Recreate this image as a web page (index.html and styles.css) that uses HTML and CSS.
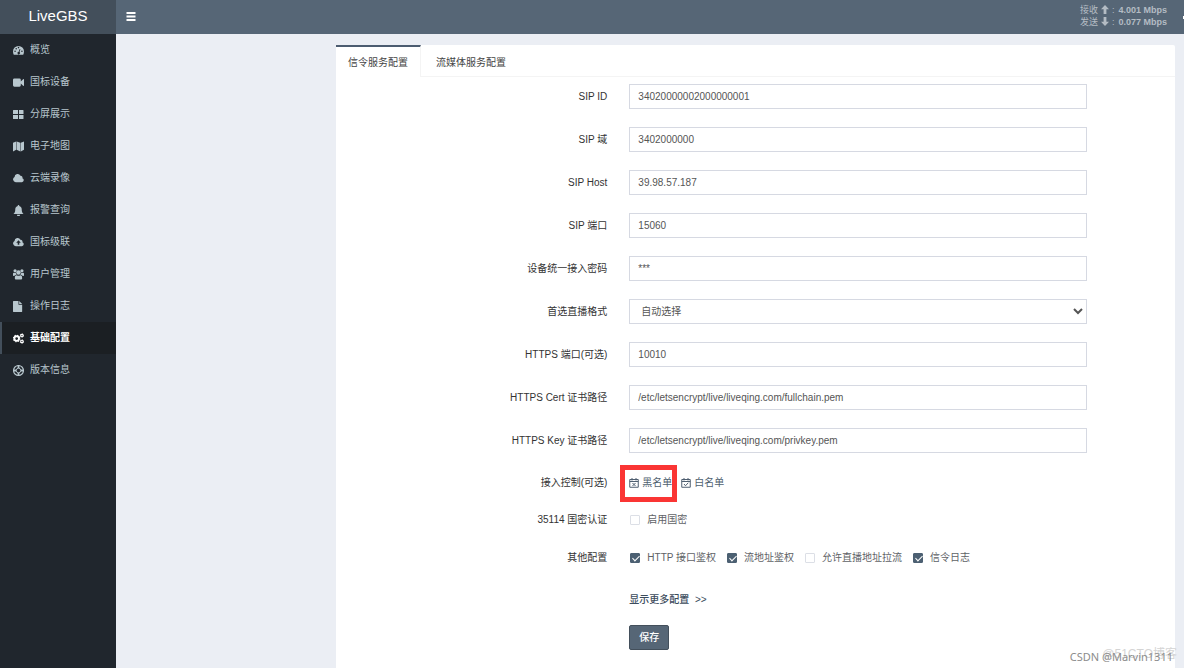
FILE: index.html
```html
<!DOCTYPE html>
<html lang="zh-CN">
<head>
<meta charset="utf-8">
<meta name="viewport" content="width=device-width, initial-scale=1">
<title>LiveGBS</title>
<link rel="stylesheet" href="styles.css">
</head>
<body>
<div class="app">
  <header class="topbar">
    <a class="logo" href="#">LiveGBS</a>
    <button class="toggle" type="button" aria-label="菜单">
      <svg viewBox="0 0 10 9"><path d="M.5 0h9v2h-9zM.5 3.5h9v2h-9zM.5 7h9v2h-9z"/></svg>
    </button>
    <div class="traffic">
      <div class="rate"><span>接收</span><svg viewBox="0 0 8 9"><path d="M4 0l4 4.2H5.4V9H2.6V4.2H0z"/></svg><span>:</span><b>4.001 Mbps</b></div>
      <div class="rate"><span>发送</span><svg viewBox="0 0 8 9"><path d="M4 9L0 4.8h2.6V0h2.8v4.8H8z"/></svg><span>:</span><b>0.077 Mbps</b></div>
    </div>
    <span class="user-dot"></span>
  </header>

  <nav class="sidebar">
    <a class="item" href="#"><svg viewBox="0 0 24 24"><path fill-rule="evenodd" d="M12 2A12 12 0 0 0 0 14c0 2.800.7 5.300 1.700 7h20.600c1-1.700 1.700-4.200 1.700-7A12 12 0 0 0 12 2zM4.500 12a1.700 1.700 0 1 1 0 3.400 1.700 1.700 0 0 1 0-3.400zM7 6.500a1.700 1.700 0 1 1 0 3.400 1.700 1.700 0 0 1 0-3.400zM12 4a1.700 1.700 0 1 1 0 3.400A1.700 1.700 0 0 1 12 4zM19.500 12a1.700 1.700 0 1 1 0 3.400 1.700 1.700 0 0 1 0-3.400zM14.500 8.500l1.700.6-2 6.300a2.800 2.800 0 1 1-1.800-.5z"/></svg>概览</a>
    <a class="item" href="#"><svg viewBox="0 0 24 24"><path d="M3 3h11a3 3 0 0 1 3 3v4l5-5c1-1 2-.5 2 1v12c0 1.500-1 2-2 1l-5-5v4a3 3 0 0 1-3 3H3a3 3 0 0 1-3-3V6a3 3 0 0 1 3-3z"/></svg>国标设备</a>
    <a class="item" href="#"><svg viewBox="0 0 22 22"><path d="M1 2h9v8H0V3a1 1 0 0 1 1-1zM12 2h8a1 1 0 0 1 1 1v7h-9zM0 12h10v8H1a1 1 0 0 1-1-1zM12 12h9v7a1 1 0 0 1-1 1h-8z"/></svg>分屏展示</a>
    <a class="item" href="#"><svg viewBox="0 0 24 24"><path d="M0 4l7-3v18l-7 4zM8 1l8 3v19l-8-4zM17 4l7-3v18l-7 4z"/></svg>电子地图</a>
    <a class="item" href="#"><svg viewBox="0 0 24 24"><path d="M6 20a6 6 0 0 1-2.600-11.300A6.700 6.700 0 0 1 16.200 6a4 4 0 0 1 4.300 5.300A4.500 4.500 0 0 1 19.500 20z"/></svg>云端录像</a>
    <a class="item" href="#"><svg viewBox="0 0 24 24"><path d="M12 0a1.500 1.500 0 0 1 1.500 2C17 2.800 19 5.500 19 9c0 6 1.500 8 4 10.500H1C3.500 17 5 15 5 9c0-3.500 2-6.200 5.500-7A1.500 1.500 0 0 1 12 0zM8.500 21h7a3.500 3.500 0 0 1-7 0z"/></svg>报警查询</a>
    <a class="item" href="#"><svg viewBox="0 0 24 24"><path fill-rule="evenodd" d="M6 20a6 6 0 0 1-2.600-11.300A6.700 6.700 0 0 1 16.200 6a4 4 0 0 1 4.300 5.300A4.500 4.500 0 0 1 19.500 20zM12 7l-5 5.500h3.300V17h3.400v-4.500H17z"/></svg>国标级联</a>
    <a class="item" href="#"><svg viewBox="0 0 24 24"><circle cx="4.500" cy="4" r="3.500"/><circle cx="19.500" cy="4" r="3.500"/><circle cx="12" cy="7.500" r="4.900"/><path d="M0 14V10.500C0 9 1 8 2.500 8.500c1.300.5 2.500.4 3.700 0 .1 2 .8 3.400 2 4.500H5.500c-1 .2-2 .6-2.500 2H1.500A1.500 1.500 0 0 1 0 14zM24 14v-3.500C24 9 23 8 21.500 8.500c-1.300.5-2.500.4-3.700 0-.1 2-.8 3.400-2 4.500h2.700c1 .2 2 .6 2.500 2h1.500A1.500 1.500 0 0 0 24 14zM4 20c0-4 1-6.500 4-6.500 2.500 1.800 5.500 1.800 8 0 3 0 4 2.500 4 6.500 0 2-1 3-3 3H7c-2 0-3-1-3-3z"/></svg>用户管理</a>
    <a class="item" href="#"><svg viewBox="0 0 24 24"><path d="M1 0h11v8h8v15a1 1 0 0 1-1 1H1a1 1 0 0 1-1-1V1a1 1 0 0 1 1-1zM13.500 0l6.500 6.500h-6.500z"/></svg>操作日志</a>
    <a class="item active" href="#" aria-current="page"><svg viewBox="0 0 24 24"><g fill="none" stroke="currentColor"><circle cx="8" cy="12" r="5" stroke-width="4"/><circle cx="8" cy="12" r="7" stroke-width="2.400" stroke-dasharray="2.750 2.750"/><circle cx="19.500" cy="5.500" r="2.700" stroke-width="2.600"/><circle cx="19.500" cy="5.500" r="4" stroke-width="1.600" stroke-dasharray="2.100 2.100"/><circle cx="19.500" cy="18.500" r="2.700" stroke-width="2.600"/><circle cx="19.500" cy="18.500" r="4" stroke-width="1.600" stroke-dasharray="2.100 2.100"/></g></svg>基础配置</a>
    <a class="item" href="#"><svg viewBox="0 0 24 24"><g fill="none" stroke="currentColor"><circle cx="12" cy="12" r="10.800" stroke-width="2.400"/><circle cx="12" cy="12" r="5" stroke-width="2"/><path d="M12 0v7M12 17v7M0 12h7M17 12h7" stroke-width="4"/></g></svg>版本信息</a>
  </nav>

  <main class="content">
    <section class="card">
      <div class="tabs" role="tablist">
        <button class="tab selected" type="button" role="tab" aria-selected="true">信令服务配置</button>
        <button class="tab" type="button" role="tab" aria-selected="false">流媒体服务配置</button>
      </div>
      <form class="form">
        <div class="row"><label for="sip-id">SIP ID</label><input class="field" id="sip-id" type="text" value="34020000002000000001"></div>
        <div class="row"><label for="sip-domain">SIP 域</label><input class="field" id="sip-domain" type="text" value="3402000000"></div>
        <div class="row"><label for="sip-host">SIP Host</label><input class="field" id="sip-host" type="text" value="39.98.57.187"></div>
        <div class="row"><label for="sip-port">SIP 端口</label><input class="field" id="sip-port" type="text" value="15060"></div>
        <div class="row"><label for="password">设备统一接入密码</label><input class="field" id="password" type="text" value="***"></div>
        <div class="row"><label for="format">首选直播格式</label><select class="field select" id="format"><option>自动选择</option></select></div>
        <div class="row"><label for="https-port">HTTPS 端口(可选)</label><input class="field" id="https-port" type="text" value="10010"></div>
        <div class="row"><label for="cert">HTTPS Cert 证书路径</label><input class="field" id="cert" type="text" value="/etc/letsencrypt/live/liveqing.com/fullchain.pem"></div>
        <div class="row"><label for="key">HTTPS Key 证书路径</label><input class="field" id="key" type="text" value="/etc/letsencrypt/live/liveqing.com/privkey.pem"></div>
        <div class="row compact"><span class="caption">接入控制(可选)</span>
          <div class="lists">
            <a class="list-link marked" href="#"><svg viewBox="0 0 20 20"><path d="M1.500 3h17v15.500h-17zM1.500 7h17M6 0v5M14 0v5M7 10l6 6M13 10l-6 6"/></svg>黑名单</a>
            <a class="list-link" href="#"><svg viewBox="0 0 20 20"><path d="M1.500 3h17v15.500h-17zM1.500 7h17M6 0v5M14 0v5M6 12l3 3.500 5.500-6"/></svg>白名单</a>
          </div>
        </div>
        <div class="row compact"><span class="caption">35114 国密认证</span>
          <div class="checks"><label class="check"><input type="checkbox">启用国密</label></div>
        </div>
        <div class="row"><span class="caption">其他配置</span>
          <div class="checks">
            <label class="check"><input type="checkbox" checked>HTTP 接口鉴权</label>
            <label class="check"><input type="checkbox" checked>流地址鉴权</label>
            <label class="check"><input type="checkbox">允许直播地址拉流</label>
            <label class="check"><input type="checkbox" checked>信令日志</label>
          </div>
        </div>
        <div class="row compact"><a class="more" href="#">显示更多配置&nbsp; &gt;&gt;</a></div>
        <div class="row"><button class="save" type="button">保存</button></div>
      </form>
    </section>
  </main>
  <div class="mark mark-back">@51CTO博客</div>
  <div class="mark mark-front">CSDN @Marvin1311</div>
</div>
</body>
</html>
```

FILE: styles.css
```css
* { box-sizing: border-box; }

body {
  margin: 0;
  background: #ebeef4;
  color: #333;
  font: 10px/16px "Liberation Sans", "Noto Sans CJK SC", sans-serif;
}

a { color: inherit; text-decoration: none; }
button, input, select { font: inherit; color: inherit; }

.app {
  position: relative;
  display: grid;
  grid-template: 34px 1fr / 116px 1fr;
  min-height: 100vh;
}

.topbar {
  grid-column: 1 / -1;
  display: flex;
  align-items: center;
  background: #566676;
  color: #fff;
}
.logo {
  width: 116px;
  align-self: stretch;
  background: #434f5b;
  font-size: 15px;
  line-height: 32px;
  text-align: center;
}
.toggle { display: flex; padding: 0 10px 2px; border: 0; background: none; color: #fff; }
.toggle svg { width: 10px; height: 9px; fill: currentColor; }
.traffic {
  margin-left: auto;
  padding: 0 16px 3px 0;
  color: #b4bcc4;
  font-size: 9px;
  line-height: 12px;
}
.rate { display: flex; align-items: center; gap: 3px; }
.rate svg { width: 8px; height: 9px; fill: currentColor; }
.rate b { padding-left: 1px; }
.user-dot { width: 1px; height: 3px; background: #fff; }

.sidebar { background: #20262d; color: #b8c7ce; }
.item {
  display: flex;
  align-items: center;
  gap: 6px;
  height: 32px;
  padding-left: 11px;
  border-left: 2px solid transparent;
}
.item svg { width: 11px; height: 11px; fill: currentColor; }
.active { border-color: #434f5b; background: #1b1f23; color: #fff; font-weight: bold; }

.content { display: flex; padding: 11px 9px 0 220px; }
.card { flex: 1; border-radius: 2px 2px 0 0; background: #fff; }
.tabs { display: flex; height: 32px; border-bottom: 1px solid #f4f4f4; }
.tab {
  padding: 2px 12px 0;
  border: 0;
  border-top: 2px solid transparent;
  background: none;
  color: #444;
}
.selected {
  height: 32px;
  border-top-color: #4c5c70;
  border-right: 1px solid #f4f4f4;
  background: #fff;
}
.tab + .tab { padding-left: 15px; }

.form { padding: 7px 8px 0; }
.row {
  display: grid;
  grid-template-columns: 4fr 7fr 1fr;
  align-items: center;
  min-height: 25px;
  margin-bottom: 18px;
}
.compact { min-height: 24px; margin-bottom: 13px; }
.row > * { grid-column: 2; margin: 0 11px; }
.row > label, .caption { grid-column: 1; text-align: right; }
.field {
  min-width: 0;
  height: 25px;
  padding: 0 8px;
  border: 1px solid #d6d9e2;
  border-radius: 0;
  background: #fff;
  color: #555;
}
.select { padding: 0 0 0 7px; }

.lists { display: flex; gap: 9px; color: #4f5f70; }
.list-link { position: relative; display: flex; align-items: center; gap: 3px; }
.list-link svg { width: 10px; height: 10px; fill: none; stroke: currentColor; stroke-width: 2; }
.marked::after {
  content: "";
  position: absolute;
  inset: -10px -5px -11px -9px;
  border: 5px solid #fa3534;
}

.checks { display: flex; flex-wrap: wrap; gap: 10px; color: #606266; }
.check { display: flex; align-items: center; gap: 7px; }
.check input {
  position: relative;
  appearance: none;
  width: 10px;
  height: 10px;
  margin: 0 0 0 1px;
  border: 1px solid #dcdfe6;
  border-radius: 1px;
  background: #fff;
}
.check input:checked { border-color: #4c6072; background: #4c6072; }
.check input:checked::after {
  content: "";
  position: absolute;
  left: 3px;
  top: 0;
  width: 3px;
  height: 6px;
  border: solid #fff;
  border-width: 0 1px 1px 0;
  transform: rotate(45deg);
}

.more { color: #3c4c5c; font-weight: 500; }
.save {
  justify-self: start;
  height: 25px;
  padding: 0 9px;
  border: 1px solid #434f5b;
  border-radius: 2px;
  background: #566676;
  color: #fff;
  font-weight: 500;
}

.mark { position: absolute; white-space: nowrap; pointer-events: none; }
.mark-back { right: 7px; bottom: 6px; color: #d4d4d4; font-size: 12px; }
.mark-front { right: 11px; bottom: 4px; color: #8c8c8c; font: 11px/14px "Noto Sans", sans-serif; }
```
